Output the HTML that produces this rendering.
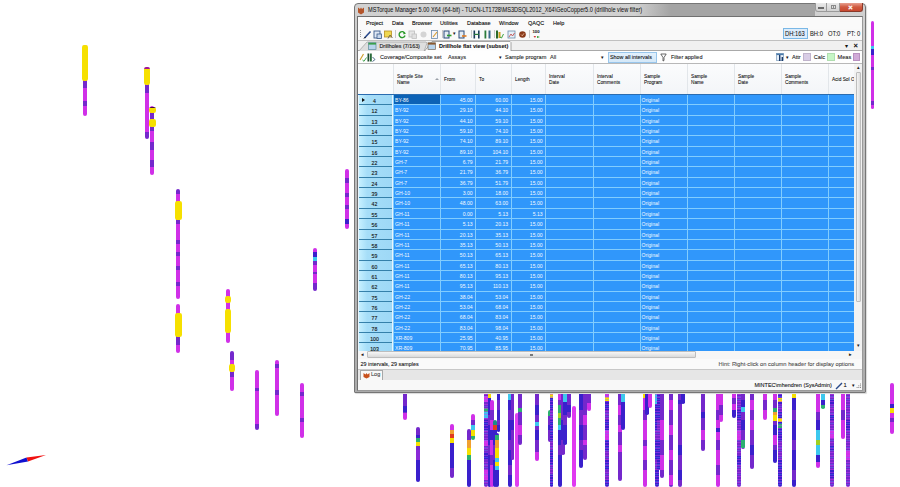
<!DOCTYPE html>
<html><head><meta charset="utf-8">
<style>
html,body{margin:0;padding:0}
body{width:900px;height:487px;overflow:hidden;position:relative;background:#fff;-webkit-font-smoothing:antialiased;font-family:"Liberation Sans",sans-serif;color:#1a1a1a}
i{position:absolute;display:block}
.a{position:absolute}
#win{position:absolute;left:354px;top:3px;width:512px;height:390px;box-sizing:border-box;border:1px solid #767676;border-radius:4px 4px 1px 1px;background:linear-gradient(#d2d2d2,#c8c8c8 60px,#b2b2b2 300px,#ababab);box-shadow:1px 1px 1px rgba(0,0,0,.15)}
#glow{position:absolute;left:280px;top:0;width:180px;height:12px;background:linear-gradient(90deg,rgba(162,162,162,0),#a4a4a4 36px)}
#client{position:absolute;left:2px;top:12px;width:504px;height:373px;border:1px solid #707070;border-right-color:#9a9a9a;border-bottom-color:#9a9a9a;background:#f4f4f4;overflow:hidden}
.t{position:absolute;white-space:nowrap;line-height:1;-webkit-text-stroke:0.12px rgba(20,20,20,.8)}
.title{left:12.7px;top:3.3px;font-size:6.3px;color:#111;transform:scaleX(0.887);transform-origin:0 0;-webkit-text-stroke:0.05px #333}
.menu{font-size:6px;top:2.5px;color:#000;transform:scaleX(0.915);transform-origin:0 0;-webkit-text-stroke:0.12px #222}
.hc{position:absolute;top:0;height:31px;box-sizing:border-box;border-left:1px solid #e2e6ea;background:linear-gradient(#fbfcfd,#f3f5f8)}
.hc span{position:absolute;left:3px;top:9.3px;font-size:5.5px;transform:scaleX(0.87);transform-origin:0 0;line-height:6.3px;color:#111;white-space:nowrap;-webkit-text-stroke:0.12px rgba(20,20,20,.8)}
.hc span.s1{top:12.7px}
.rh{position:absolute;left:1px;width:33px;height:10.34px;box-sizing:border-box;border-bottom:1.5px solid #3580aa;background:linear-gradient(90deg,#c6f0ff,#a6def8 25%,#9ed8f6)}
.rh span{position:absolute;left:-1px;width:33px;text-align:center;top:3px;font-size:5.2px;color:#111;-webkit-text-stroke:0.12px #222}
.arr{position:absolute;left:2.5px;top:3px;width:0;height:0;border-left:3px solid #111;border-top:2px solid transparent;border-bottom:2px solid transparent}
.c{position:absolute;height:10.34px;box-sizing:border-box;border-left:1px solid #82cdfe;border-bottom:1px solid #82cdfe;background:#3097fb;color:#f4faff;font-size:5.1px;line-height:11.5px;padding-left:1px;white-space:nowrap}
.c.n{text-align:right;padding-right:2.4px}
.c.sel{background:#0c62b6}
</style></head><body>
<i style="left:83.2px;top:45.0px;width:4.0px;height:71.0px;background:linear-gradient(#d030e8 0.0px 35.5px,#7428cc 35.5px 43.0px,#d030e8 43.0px 56.0px,#7428cc 56.0px 61.0px,#d030e8 61.0px 71.0px);border-radius:2.0px 2.0px 2.0px 2.0px"></i>
<i style="left:82.2px;top:45.0px;width:6.0px;height:35.5px;background:#f6e000;border-radius:2.2px 2.2px 2.2px 2.2px"></i>
<i style="left:145.0px;top:67.0px;width:4.0px;height:71.5px;background:linear-gradient(#d030e8 0.0px 18.0px,#7428cc 18.0px 26.0px,#d030e8 26.0px 65.0px,#7428cc 65.0px 71.5px);border-radius:2.0px 2.0px 2.0px 2.0px"></i>
<i style="left:143.7px;top:67.2px;width:6.7px;height:18.0px;background:linear-gradient(#a01890 0.0px 1.8px,#f6e000 1.8px 18.0px);border-radius:2.2px 2.2px 2.2px 2.2px"></i>
<i style="left:150.0px;top:105.7px;width:4.0px;height:69.8px;background:linear-gradient(#d030e8 0.0px 7.3px,#7428cc 7.3px 13.3px,#d030e8 13.3px 21.3px,#7428cc 21.3px 25.3px,#d030e8 25.3px 36.3px,#7428cc 36.3px 44.3px,#d030e8 44.3px 54.3px,#7428cc 54.3px 61.3px,#d030e8 61.3px 69.8px);border-radius:2.0px 2.0px 2.0px 2.0px"></i>
<i style="left:148.5px;top:106.5px;width:7.0px;height:6.5px;background:linear-gradient(#401040 0.0px 1.5px,#f6e000 1.5px 6.5px);border-radius:2.2px 2.2px 2.2px 2.2px"></i>
<i style="left:148.5px;top:119.0px;width:7.0px;height:8.0px;background:#f6e000;border-radius:2.2px 2.2px 2.2px 2.2px"></i>
<i style="left:176.3px;top:189.0px;width:4.0px;height:110.2px;background:linear-gradient(#7428cc 0.0px 5.0px,#d030e8 5.0px 31.0px,#7428cc 31.0px 35.0px,#d030e8 35.0px 51.0px,#7428cc 51.0px 55.0px,#d030e8 55.0px 63.0px,#7428cc 63.0px 67.0px,#d030e8 67.0px 77.0px,#7428cc 77.0px 81.0px,#d030e8 81.0px 93.0px,#7428cc 93.0px 97.0px,#d030e8 97.0px 110.2px);border-radius:2.0px 2.0px 2.0px 2.0px"></i>
<i style="left:174.6px;top:200.7px;width:7.4px;height:19.3px;background:#f6e000;border-radius:2.2px 2.2px 2.2px 2.2px"></i>
<i style="left:176.3px;top:304.2px;width:4.0px;height:49.0px;background:linear-gradient(#d030e8 0.0px 32.3px,#7428cc 32.3px 40.8px,#d030e8 40.8px 49.0px);border-radius:2.0px 2.0px 2.0px 2.0px"></i>
<i style="left:175.1px;top:312.5px;width:6.8px;height:24.0px;background:#f6e000;border-radius:2.2px 2.2px 2.2px 2.2px"></i>
<i style="left:225.8px;top:288.6px;width:4.0px;height:54.9px;background:#d030e8;border-radius:2.0px 2.0px 2.0px 2.0px"></i>
<i style="left:224.8px;top:296.0px;width:6.0px;height:6.5px;background:#f6e000;border-radius:2.2px 2.2px 2.2px 2.2px"></i>
<i style="left:224.8px;top:309.0px;width:6.0px;height:24.0px;background:#f6e000;border-radius:2.2px 2.2px 2.2px 2.2px"></i>
<i style="left:229.7px;top:351.0px;width:4.0px;height:39.8px;background:linear-gradient(#7428cc 0.0px 9.0px,#d030e8 9.0px 20.6px,#7428cc 20.6px 26.0px,#d030e8 26.0px 39.8px);border-radius:2.0px 2.0px 2.0px 2.0px"></i>
<i style="left:228.7px;top:363.7px;width:6.0px;height:7.9px;background:#f6e000;border-radius:2.2px 2.2px 2.2px 2.2px"></i>
<i style="left:255.0px;top:370.2px;width:4.0px;height:59.7px;background:linear-gradient(#d030e8 0.0px 17.8px,#7428cc 17.8px 20.8px,#d030e8 20.8px 53.8px,#7428cc 53.8px 59.7px);border-radius:2.0px 2.0px 2.0px 2.0px"></i>
<i style="left:275.3px;top:360.2px;width:4.0px;height:55.4px;background:linear-gradient(#d030e8 0.0px 3.8px,#7428cc 3.8px 7.8px,#d030e8 7.8px 29.8px,#7428cc 29.8px 34.8px,#d030e8 34.8px 55.4px);border-radius:2.0px 2.0px 2.0px 2.0px"></i>
<i style="left:300.3px;top:382.7px;width:4.0px;height:55.5px;background:linear-gradient(#d030e8 0.0px 8.8px,#7428cc 8.8px 13.3px,#d030e8 13.3px 34.8px,#7428cc 34.8px 39.3px,#d030e8 39.3px 55.5px);border-radius:2.0px 2.0px 2.0px 2.0px"></i>
<i style="left:312.9px;top:248.0px;width:4.3px;height:42.5px;background:linear-gradient(#d030e8 0.0px 4.0px,#3a20cc 4.0px 9.0px,#3cc8ee 9.0px 13.0px,#7428cc 13.0px 17.0px,#d030e8 17.0px 24.0px,#7428cc 24.0px 26.0px,#d030e8 26.0px 35.0px,#7428cc 35.0px 42.5px);border-radius:2.1px 2.1px 2.1px 2.1px"></i>
<i style="left:344.6px;top:169.2px;width:4.0px;height:60.3px;background:linear-gradient(#d030e8 0.0px 8.8px,#7428cc 8.8px 13.8px,#d030e8 13.8px 23.8px,#7428cc 23.8px 27.8px,#d030e8 27.8px 35.8px,#7428cc 35.8px 39.8px,#d030e8 39.8px 49.8px,#3a20cc 49.8px 54.8px,#d030e8 54.8px 60.3px);border-radius:2.0px 2.0px 2.0px 2.0px"></i>
<i style="left:870.6px;top:21.3px;width:3.6px;height:88.0px;background:linear-gradient(#d030e8 0.0px 24.7px,#3cc8ee 24.7px 28.2px,#3a20cc 28.2px 33.7px,#d030e8 33.7px 46.2px,#7428cc 46.2px 48.7px,#d030e8 48.7px 80.1px,#7428cc 80.1px 83.7px,#d030e8 83.7px 88.0px);border-radius:1.8px 1.8px 1.8px 1.8px"></i>
<i style="left:889.9px;top:383.0px;width:4.2px;height:51.0px;background:linear-gradient(#d030e8 0.0px 21.3px,#3a20cc 21.3px 25.4px,#f6e000 25.4px 30.0px,#d030e8 30.0px 35.0px,#7428cc 35.0px 39.0px,#d030e8 39.0px 51.0px);border-radius:2.1px 2.1px 2.1px 2.1px"></i>
<i style="left:403.0px;top:394.0px;width:4.0px;height:26.0px;background:linear-gradient(#7428cc 0.0px 12.0px,#3a20cc 12.0px 18.0px,#7428cc 18.0px 19.0px,#d030e8 19.0px 26.0px);border-radius:0 0 2.0px 2.0px"></i>
<i style="left:416.0px;top:427.0px;width:4.0px;height:54.6px;background:linear-gradient(#7428cc 0.0px 8.0px,#3a20cc 8.0px 11.0px,#2cb070 11.0px 15.0px,#f6e000 15.0px 19.0px,#7428cc 19.0px 23.0px,#8a2ad8 23.0px 33.0px,#3a20cc 33.0px 54.6px);border-radius:2.0px 2.0px 2.0px 2.0px"></i>
<i style="left:450.2px;top:424.3px;width:4.0px;height:53.3px;background:linear-gradient(#d030e8 0.0px 5.7px,#f0a030 5.7px 9.7px,#e03a20 9.7px 13.7px,#f6e000 13.7px 18.7px,#3a20cc 18.7px 43.7px,#7428cc 43.7px 53.3px);border-radius:2.0px 2.0px 2.0px 2.0px"></i>
<i style="left:466.5px;top:429.0px;width:4.0px;height:58.0px;background:linear-gradient(#7428cc 0.0px 11.0px,#f0a030 11.0px 19.0px,#f6e000 19.0px 26.0px,#2cb070 26.0px 31.0px,#3a20cc 31.0px 58.0px);border-radius:2.0px 2.0px 2.0px 2.0px"></i>
<i style="left:470.5px;top:414.0px;width:4.0px;height:26.0px;background:linear-gradient(#d030e8 0.0px 6.0px,#7428cc 6.0px 11.0px,#3cc8ee 11.0px 16.0px,#f6e000 16.0px 22.0px,#2cb070 22.0px 26.0px);border-radius:2.0px 2.0px 2.0px 2.0px"></i>
<i style="left:484.0px;top:394.0px;width:4.0px;height:93.0px;background:repeating-linear-gradient(rgba(210,60,240,.45) 0 1px,transparent 1px 2px,rgba(90,140,255,.35) 2px 2.6px,transparent 2.6px 3.4px),linear-gradient(#7428cc 0.0px 2.0px,#d030e8 2.0px 8.0px,#7428cc 8.0px 14.0px,#2cb070 14.0px 18.0px,#3cc8ee 18.0px 24.0px,#7428cc 24.0px 26.0px,#3a20cc 26.0px 36.0px,#7428cc 36.0px 46.0px,#d030e8 46.0px 52.0px,#7428cc 52.0px 58.0px,#3a20cc 58.0px 66.0px,#7428cc 66.0px 76.0px,#d030e8 76.0px 86.0px,#7428cc 86.0px 93.0px);border-radius:0 0 2.0px 2.0px"></i>
<i style="left:488.0px;top:394.0px;width:3.0px;height:93.0px;background:linear-gradient(#f6e000 0.0px 4.0px,#3a20cc 4.0px 21.0px,#7428cc 21.0px 31.0px,#3a20cc 31.0px 51.0px,#7428cc 51.0px 61.0px,#3a20cc 61.0px 93.0px);border-radius:0 0 1.5px 1.5px"></i>
<i style="left:490.0px;top:400.0px;width:4.0px;height:87.0px;background:linear-gradient(#d030e8 0.0px 10.0px,#7428cc 10.0px 20.0px,#d030e8 20.0px 30.0px,#3a20cc 30.0px 40.0px,#d030e8 40.0px 55.0px,#7428cc 55.0px 65.0px,#d030e8 65.0px 87.0px);border-radius:2.0px 2.0px 2.0px 2.0px"></i>
<i style="left:492.5px;top:420.0px;width:4.0px;height:67.0px;background:linear-gradient(#1a8a8a 0.0px 5.0px,#e03a20 5.0px 10.0px,#3a20cc 10.0px 25.0px,#7428cc 25.0px 40.0px,#3a20cc 40.0px 67.0px);border-radius:2.0px 2.0px 2.0px 2.0px"></i>
<i style="left:495.0px;top:433.0px;width:4.0px;height:54.0px;background:linear-gradient(#3a20cc 0.0px 2.0px,#2cb070 2.0px 7.0px,#f0a030 7.0px 15.0px,#f6e000 15.0px 25.0px,#3cc8ee 25.0px 29.0px,#f6e000 29.0px 33.0px,#3cc8ee 33.0px 37.0px,#3a20cc 37.0px 54.0px);border-radius:2.0px 2.0px 2.0px 2.0px"></i>
<i style="left:496.8px;top:394.0px;width:3.5px;height:38.0px;background:linear-gradient(#3a20cc 0.0px 6.0px,#7428cc 6.0px 16.0px,#3a20cc 16.0px 26.0px,#7428cc 26.0px 31.0px,#3a20cc 31.0px 38.0px);border-radius:0 0 1.8px 1.8px"></i>
<i style="left:508.0px;top:394.0px;width:4.0px;height:93.0px;background:linear-gradient(#3cc8ee 0.0px 6.0px,#3a20cc 6.0px 16.0px,#7428cc 16.0px 26.0px,#3a20cc 26.0px 46.0px,#7428cc 46.0px 56.0px,#3a20cc 56.0px 71.0px,#7428cc 71.0px 81.0px,#3a20cc 81.0px 93.0px);border-radius:0 0 2.0px 2.0px"></i>
<i style="left:510.8px;top:394.0px;width:3.5px;height:66.0px;background:linear-gradient(#7428cc 0.0px 26.0px,#3a20cc 26.0px 36.0px,#7428cc 36.0px 66.0px);border-radius:0 0 1.8px 1.8px"></i>
<i style="left:514.7px;top:413.0px;width:4.2px;height:74.0px;background:#e040f0;border-radius:2.1px 2.1px 2.1px 2.1px"></i>
<i style="left:518.0px;top:394.0px;width:4.0px;height:51.0px;background:linear-gradient(#7428cc 0.0px 14.0px,#2cb070 14.0px 18.0px,#7428cc 18.0px 31.0px,#d030e8 31.0px 41.0px,#7428cc 41.0px 51.0px);border-radius:0 0 2.0px 2.0px"></i>
<i style="left:535.0px;top:394.0px;width:4.0px;height:66.7px;background:linear-gradient(#7428cc 0.0px 11.0px,#3a20cc 11.0px 21.0px,#7428cc 21.0px 28.0px,#3cc8ee 28.0px 32.0px,#7428cc 32.0px 36.0px,#3a20cc 36.0px 46.0px,#7428cc 46.0px 58.0px,#d030e8 58.0px 66.7px);border-radius:0 0 2.0px 2.0px"></i>
<i style="left:547.5px;top:410.0px;width:4.0px;height:32.0px;background:linear-gradient(#2cb070 0.0px 6.0px,#7428cc 6.0px 15.0px,#3a20cc 15.0px 20.0px,#7428cc 20.0px 32.0px);border-radius:2.0px 2.0px 2.0px 2.0px"></i>
<i style="left:549.8px;top:394.0px;width:3.5px;height:93.0px;background:repeating-linear-gradient(rgba(210,60,240,.45) 0 1px,transparent 1px 2px,rgba(90,140,255,.35) 2px 2.6px,transparent 2.6px 3.4px),linear-gradient(#f6e000 0.0px 4.0px,#3a20cc 4.0px 16.0px,#7428cc 16.0px 26.0px,#3a20cc 26.0px 46.0px,#7428cc 46.0px 56.0px,#3a20cc 56.0px 71.0px,#7428cc 71.0px 81.0px,#3a20cc 81.0px 93.0px);border-radius:0 0 1.8px 1.8px"></i>
<i style="left:557.8px;top:394.0px;width:4.0px;height:93.0px;background:linear-gradient(#d030e8 0.0px 6.0px,#7428cc 6.0px 11.0px,#2cb070 11.0px 19.0px,#a0d020 19.0px 24.0px,#2cb070 24.0px 31.0px,#3cc8ee 31.0px 36.0px,#3a20cc 36.0px 51.0px,#7428cc 51.0px 61.0px,#3a20cc 61.0px 93.0px);border-radius:0 0 2.0px 2.0px"></i>
<i style="left:561.2px;top:394.0px;width:3.5px;height:61.0px;background:linear-gradient(#7428cc 0.0px 26.0px,#3a20cc 26.0px 46.0px,#7428cc 46.0px 61.0px);border-radius:0 0 1.8px 1.8px"></i>
<i style="left:563.2px;top:394.0px;width:3.5px;height:51.0px;background:linear-gradient(#3cc8ee 0.0px 8.0px,#3a20cc 8.0px 21.0px,#7428cc 21.0px 31.0px,#3a20cc 31.0px 51.0px);border-radius:0 0 1.8px 1.8px"></i>
<i style="left:566.8px;top:394.0px;width:4.0px;height:24.0px;background:linear-gradient(#7428cc 0.0px 11.0px,#3a20cc 11.0px 18.0px,#7428cc 18.0px 24.0px);border-radius:0 0 2.0px 2.0px"></i>
<i style="left:571.7px;top:406.0px;width:4.2px;height:81.0px;background:#e038f0;border-radius:2.1px 2.1px 2.1px 2.1px"></i>
<i style="left:578.6px;top:394.0px;width:4.0px;height:73.7px;background:linear-gradient(#3a20cc 0.0px 16.0px,#7428cc 16.0px 31.0px,#3a20cc 31.0px 46.0px,#7428cc 46.0px 56.0px,#3a20cc 56.0px 73.7px);border-radius:0 0 2.0px 2.0px"></i>
<i style="left:583.0px;top:394.0px;width:4.0px;height:65.7px;background:linear-gradient(#7428cc 0.0px 21.0px,#d030e8 21.0px 31.0px,#7428cc 31.0px 46.0px,#d030e8 46.0px 51.0px,#7428cc 51.0px 65.7px);border-radius:0 0 2.0px 2.0px"></i>
<i style="left:587.3px;top:394.0px;width:4.0px;height:17.0px;background:linear-gradient(#7428cc 0.0px 9.0px,#d030e8 9.0px 17.0px);border-radius:0 0 2.0px 2.0px"></i>
<i style="left:604.5px;top:394.0px;width:4.0px;height:93.0px;background:repeating-linear-gradient(rgba(210,60,240,.45) 0 1px,transparent 1px 2px,rgba(90,140,255,.35) 2px 2.6px,transparent 2.6px 3.4px),linear-gradient(#d030e8 0.0px 3.0px,#f6e000 3.0px 7.0px,#3a20cc 7.0px 16.0px,#7428cc 16.0px 26.0px,#3a20cc 26.0px 36.0px,#d030e8 36.0px 46.0px,#3a20cc 46.0px 56.0px,#7428cc 56.0px 66.0px,#3a20cc 66.0px 76.0px,#7428cc 76.0px 86.0px,#3a20cc 86.0px 93.0px);border-radius:0 0 2.0px 2.0px"></i>
<i style="left:617.8px;top:394.0px;width:4.0px;height:86.6px;background:linear-gradient(#7428cc 0.0px 11.0px,#d030e8 11.0px 21.0px,#7428cc 21.0px 31.0px,#d030e8 31.0px 38.0px,#7428cc 38.0px 51.0px,#d030e8 51.0px 58.0px,#7428cc 58.0px 86.6px);border-radius:0 0 2.0px 2.0px"></i>
<i style="left:620.8px;top:394.0px;width:4.0px;height:35.8px;background:linear-gradient(#3cc8ee 0.0px 8.0px,#3a20cc 8.0px 35.8px);border-radius:0 0 2.0px 2.0px"></i>
<i style="left:642.6px;top:394.0px;width:4.0px;height:93.0px;background:linear-gradient(#f6e000 0.0px 4.0px,#d030e8 4.0px 16.0px,#7428cc 16.0px 26.0px,#d030e8 26.0px 46.0px,#7428cc 46.0px 52.0px,#d030e8 52.0px 66.0px,#7428cc 66.0px 76.0px,#d030e8 76.0px 93.0px);border-radius:0 0 2.0px 2.0px"></i>
<i style="left:645.2px;top:394.0px;width:3.5px;height:21.0px;background:#3a20cc;border-radius:0 0 1.8px 1.8px"></i>
<i style="left:647.8px;top:394.0px;width:4.5px;height:14.0px;background:#d030e8;border-radius:0 0 2.2px 2.2px"></i>
<i style="left:655.0px;top:394.0px;width:4.0px;height:93.0px;background:repeating-linear-gradient(rgba(210,60,240,.45) 0 1px,transparent 1px 2px,rgba(90,140,255,.35) 2px 2.6px,transparent 2.6px 3.4px),linear-gradient(#3cc8ee 0.0px 10.0px,#3a20cc 10.0px 36.0px,#7428cc 36.0px 46.0px,#3a20cc 46.0px 66.0px,#7428cc 66.0px 76.0px,#3a20cc 76.0px 93.0px);border-radius:0 0 2.0px 2.0px"></i>
<i style="left:657.2px;top:394.0px;width:3.5px;height:76.0px;background:repeating-linear-gradient(rgba(210,60,240,.45) 0 1px,transparent 1px 2px,rgba(90,140,255,.35) 2px 2.6px,transparent 2.6px 3.4px),linear-gradient(#3a20cc 0.0px 26.0px,#7428cc 26.0px 46.0px,#3a20cc 46.0px 76.0px);border-radius:0 0 1.8px 1.8px"></i>
<i style="left:660.0px;top:394.0px;width:4.0px;height:83.6px;background:linear-gradient(#7428cc 0.0px 26.0px,#d030e8 26.0px 46.0px,#7428cc 46.0px 61.0px,#d030e8 61.0px 76.0px,#7428cc 76.0px 83.6px);border-radius:0 0 2.0px 2.0px"></i>
<i style="left:669.0px;top:394.0px;width:4.0px;height:93.0px;background:linear-gradient(#7428cc 0.0px 6.0px,#d030e8 6.0px 16.0px,#7428cc 16.0px 31.0px,#d030e8 31.0px 41.0px,#7428cc 41.0px 56.0px,#d030e8 56.0px 66.0px,#7428cc 66.0px 81.0px,#d030e8 81.0px 91.0px,#7428cc 91.0px 93.0px);border-radius:0 0 2.0px 2.0px"></i>
<i style="left:678.0px;top:394.0px;width:4.0px;height:93.0px;background:linear-gradient(#7428cc 0.0px 6.0px,#3a20cc 6.0px 10.0px,#7428cc 10.0px 51.0px,#3a20cc 51.0px 61.0px,#7428cc 61.0px 76.0px,#3a20cc 76.0px 86.0px,#7428cc 86.0px 93.0px);border-radius:0 0 2.0px 2.0px"></i>
<i style="left:681.0px;top:394.0px;width:3.5px;height:10.0px;background:#3a20cc;border-radius:0 0 1.8px 1.8px"></i>
<i style="left:701.0px;top:394.0px;width:4.0px;height:57.4px;background:linear-gradient(#7428cc 0.0px 18.0px,#3a20cc 18.0px 24.0px,#7428cc 24.0px 36.0px,#d030e8 36.0px 46.0px,#7428cc 46.0px 57.4px);border-radius:0 0 2.0px 2.0px"></i>
<i style="left:715.5px;top:394.0px;width:4.0px;height:93.0px;background:linear-gradient(#d030e8 0.0px 16.0px,#7428cc 16.0px 26.0px,#d030e8 26.0px 34.0px,#3a20cc 34.0px 38.0px,#d030e8 38.0px 46.0px,#7428cc 46.0px 56.0px,#d030e8 56.0px 71.0px,#7428cc 71.0px 81.0px,#d030e8 81.0px 93.0px);border-radius:0 0 2.0px 2.0px"></i>
<i style="left:719.0px;top:394.0px;width:4.0px;height:28.0px;background:linear-gradient(#d030e8 0.0px 11.0px,#7428cc 11.0px 21.0px,#d030e8 21.0px 28.0px);border-radius:0 0 2.0px 2.0px"></i>
<i style="left:732.2px;top:394.0px;width:4.0px;height:24.0px;background:linear-gradient(#d030e8 0.0px 4.0px,#7428cc 4.0px 10.0px,#d030e8 10.0px 16.0px,#3a20cc 16.0px 24.0px);border-radius:0 0 2.0px 2.0px"></i>
<i style="left:736.8px;top:394.0px;width:4.0px;height:93.0px;background:repeating-linear-gradient(rgba(210,60,240,.45) 0 1px,transparent 1px 2px,rgba(90,140,255,.35) 2px 2.6px,transparent 2.6px 3.4px),linear-gradient(#7428cc 0.0px 16.0px,#3a20cc 16.0px 26.0px,#7428cc 26.0px 36.0px,#d030e8 36.0px 46.0px,#7428cc 46.0px 61.0px,#3a20cc 61.0px 71.0px,#7428cc 71.0px 93.0px);border-radius:0 0 2.0px 2.0px"></i>
<i style="left:741.4px;top:394.0px;width:4.0px;height:55.0px;background:linear-gradient(#7428cc 0.0px 6.0px,#3a20cc 6.0px 13.0px,#3cc8ee 13.0px 18.0px,#7428cc 18.0px 26.0px,#3a20cc 26.0px 36.0px,#7428cc 36.0px 46.0px,#2cb070 46.0px 54.0px,#7428cc 54.0px 55.0px);border-radius:0 0 2.0px 2.0px"></i>
<i style="left:750.0px;top:394.0px;width:4.0px;height:74.7px;background:linear-gradient(#7428cc 0.0px 6.0px,#d030e8 6.0px 16.0px,#7428cc 16.0px 26.0px,#d030e8 26.0px 36.0px,#7428cc 36.0px 51.0px,#3a20cc 51.0px 61.0px,#7428cc 61.0px 74.7px);border-radius:0 0 2.0px 2.0px"></i>
<i style="left:763.0px;top:394.0px;width:4.0px;height:26.0px;background:linear-gradient(#d030e8 0.0px 6.0px,#7428cc 6.0px 16.0px,#d030e8 16.0px 26.0px);border-radius:0 0 2.0px 2.0px"></i>
<i style="left:773.0px;top:394.0px;width:4.0px;height:69.3px;background:linear-gradient(#d030e8 0.0px 6.0px,#7428cc 6.0px 14.0px,#2cb070 14.0px 18.0px,#f0a030 18.0px 21.0px,#f6e000 21.0px 27.0px,#7428cc 27.0px 31.0px,#3a20cc 31.0px 41.0px,#d030e8 41.0px 51.0px,#7428cc 51.0px 56.0px,#3a20cc 56.0px 69.0px,#7428cc 69.0px 69.3px);border-radius:0 0 2.0px 2.0px"></i>
<i style="left:778.0px;top:394.0px;width:4.0px;height:93.0px;background:repeating-linear-gradient(rgba(210,60,240,.45) 0 1px,transparent 1px 2px,rgba(90,140,255,.35) 2px 2.6px,transparent 2.6px 3.4px),linear-gradient(#3a20cc 0.0px 4.0px,#f6e000 4.0px 8.0px,#3a20cc 8.0px 11.0px,#7428cc 11.0px 18.0px,#3a20cc 18.0px 24.0px,#f6e000 24.0px 28.0px,#3a20cc 28.0px 30.0px,#2cb070 30.0px 34.0px,#3a20cc 34.0px 46.0px,#7428cc 46.0px 66.0px,#3a20cc 66.0px 93.0px);border-radius:0 0 2.0px 2.0px"></i>
<i style="left:791.8px;top:394.0px;width:4.0px;height:93.0px;background:linear-gradient(#f6e000 0.0px 4.0px,#3a20cc 4.0px 16.0px,#7428cc 16.0px 26.0px,#3a20cc 26.0px 46.0px,#7428cc 46.0px 56.0px,#3a20cc 56.0px 76.0px,#7428cc 76.0px 86.0px,#3a20cc 86.0px 93.0px);border-radius:0 0 2.0px 2.0px"></i>
<i style="left:815.5px;top:394.0px;width:4.0px;height:74.0px;background:linear-gradient(#d030e8 0.0px 18.0px,#7428cc 18.0px 26.0px,#3a20cc 26.0px 36.0px,#3cc8ee 36.0px 46.0px,#a0d020 46.0px 51.0px,#3cc8ee 51.0px 61.0px,#3a20cc 61.0px 68.0px,#d030e8 68.0px 74.0px);border-radius:0 0 2.0px 2.0px"></i>
<i style="left:821.2px;top:394.0px;width:3.5px;height:15.0px;background:linear-gradient(#3cc8ee 0.0px 6.0px,#3a20cc 6.0px 11.0px,#2cb070 11.0px 15.0px);border-radius:0 0 1.8px 1.8px"></i>
<i style="left:829.5px;top:394.0px;width:4.0px;height:93.0px;background:repeating-linear-gradient(rgba(210,60,240,.45) 0 1px,transparent 1px 2px,rgba(90,140,255,.35) 2px 2.6px,transparent 2.6px 3.4px),linear-gradient(#7428cc 0.0px 6.0px,#3a20cc 6.0px 11.0px,#7428cc 11.0px 21.0px,#3a20cc 21.0px 26.0px,#7428cc 26.0px 36.0px,#d030e8 36.0px 44.0px,#7428cc 44.0px 51.0px,#3a20cc 51.0px 56.0px,#7428cc 56.0px 76.0px,#3a20cc 76.0px 84.0px,#7428cc 84.0px 93.0px);border-radius:0 0 2.0px 2.0px"></i>
<i style="left:841.4px;top:394.0px;width:4.0px;height:45.4px;background:linear-gradient(#d030e8 0.0px 16.0px,#7428cc 16.0px 26.0px,#d030e8 26.0px 45.4px);border-radius:0 0 2.0px 2.0px"></i>
<i style="left:845.8px;top:394.0px;width:4.0px;height:93.0px;background:repeating-linear-gradient(rgba(210,60,240,.45) 0 1px,transparent 1px 2px,rgba(90,140,255,.35) 2px 2.6px,transparent 2.6px 3.4px),linear-gradient(#7428cc 0.0px 26.0px,#3a20cc 26.0px 36.0px,#7428cc 36.0px 56.0px,#d030e8 56.0px 66.0px,#7428cc 66.0px 93.0px);border-radius:0 0 2.0px 2.0px"></i>
<svg class="a" style="left:0;top:0" width="60" height="487"><polygon points="6.5,465.3 26.5,457.6 28,461.6" fill="#1010d0"/><polygon points="26.5,457.6 46,455 28,461.6" fill="#f01010"/></svg>
<div id="win">
  <!-- title -->
  <div id="glow"></div>
  <svg class="a" style="left:2px;top:2px" width="8" height="9"><path d="M1,1.5 L3,3 L4,1.5 L5,3 L7,1.5 L7,6.5 L4,8.5 L1,6.5Z" fill="#b4552a"/></svg>
  <div class="t title">MSTorque Manager 5.00 X64 (64-bit) - TUCN-LT1728\MS3DSQL2012_X64\GeoCopper5.0 (drillhole view filter)</div>
  <!-- caption buttons -->
  <div class="a" style="left:459.5px;top:-1px;width:12.5px;height:9px;box-sizing:border-box;border:1px solid #9a9a9a;border-top:0;border-radius:0 0 0 3px;background:linear-gradient(#eaeaea,#d2d2d2)"><i style="left:2.3px;top:4.1px;width:6.6px;height:2.2px;box-sizing:border-box;background:#fff;border:0.7px solid #6a6a6a"></i></div>
  <div class="a" style="left:472px;top:-1px;width:13px;height:9px;box-sizing:border-box;border:1px solid #9a9a9a;border-top:0;border-left:0;background:linear-gradient(#eaeaea,#d2d2d2)"><i style="left:4px;top:2.3px;width:5.4px;height:4px;border:0.8px solid #8a8a8a;box-sizing:border-box;background:linear-gradient(90deg,transparent 40%,#8a8a8a 40% 60%,transparent 60%)"></i></div>
  <div class="a" style="left:485px;top:-1px;width:22.5px;height:9px;box-sizing:border-box;border:1px solid #8a3a2a;border-top:0;border-left:0;border-radius:0 0 3px 0;background:linear-gradient(#e8a090,#d05a40 50%,#c84830)"><span class="t" style="left:8.2px;top:0.6px;font-size:7.5px;color:#fff;font-weight:bold;-webkit-text-stroke:0.3px #fff">×</span></div>
  <div id="client">
    <!-- menu bar -->
    <div class="a" style="left:0;top:0;width:504px;height:11.5px;background:#fafafa"></div>
    <div class="t menu" style="left:7.5px">Project</div>
    <div class="t menu" style="left:33.5px">Data</div>
    <div class="t menu" style="left:53.5px">Browser</div>
    <div class="t menu" style="left:82px">Utilities</div>
    <div class="t menu" style="left:109px">Database</div>
    <div class="t menu" style="left:140.5px">Window</div>
    <div class="t menu" style="left:170px">QAQC</div>
    <div class="t menu" style="left:195px">Help</div>
    <!-- toolbar -->
    <div class="a" style="left:0;top:11.5px;width:504px;height:11.5px;background:#f9f9f9"></div>
    <i style="left:2px;top:13px;width:1px;height:8px;background:repeating-linear-gradient(#999 0 1px,transparent 1px 2px)"></i>
<svg class="a" style="left:4.5px;top:12.5px" width="9" height="9"><path d="M1.5,8 L7.5,1.5" stroke="#2a4a8c" stroke-width="1.6"/><path d="M1,8.5 L2.5,7" stroke="#111" stroke-width="1"/></svg>
<svg class="a" style="left:15.2px;top:12.5px" width="9" height="9"><rect x="1" y="1" width="6" height="7" fill="#dfe8f4" stroke="#3a5a8a" stroke-width="0.9"/><rect x="4" y="4" width="4.5" height="4.5" fill="#c8d8ec" stroke="#3a5a8a" stroke-width="0.8"/></svg>
<svg class="a" style="left:26.3px;top:12.5px" width="9" height="9"><rect x="0.5" y="1" width="7" height="6" fill="#f0d850" stroke="#b89020" stroke-width="0.8"/><path d="M4,8.5 L6,5 L8.5,8" stroke="#555" fill="none" stroke-width="0.8"/></svg>
<i style="left:37.4px;top:13px;width:0.8px;height:8px;background:#c8c8c8"></i>
<svg class="a" style="left:39.5px;top:12.5px" width="9" height="9"><path d="M6.8,3.2 A3,3 0 1 0 7,5.5" stroke="#2a9a2a" stroke-width="1.4" fill="none"/><path d="M5.2,1.5 L8,3.5 L5.5,4.5Z" fill="#2a9a2a"/></svg>
<svg class="a" style="left:50.2px;top:12.5px" width="9" height="9"><rect x="1" y="1" width="5.5" height="6" fill="#e6e6e6" stroke="#c0c0c0" stroke-width="0.9"/><rect x="4" y="4" width="4.5" height="4.5" fill="#e0e0e0" stroke="#c0c0c0" stroke-width="0.8"/></svg>
<svg class="a" style="left:60.5px;top:12.5px" width="9" height="9"><circle cx="4.5" cy="4.5" r="3" fill="#d4d4d4"/></svg>
<svg class="a" style="left:71.8px;top:12.5px" width="9" height="9"><rect x="1.5" y="0.5" width="6" height="8" fill="#f4f4f8" stroke="#6a8aaa" stroke-width="0.8"/><path d="M3,7 L7,2" stroke="#d8a030" stroke-width="1.2"/></svg>
<i style="left:83.6px;top:13px;width:0.8px;height:8px;background:#c8c8c8"></i>
<svg class="a" style="left:85.2px;top:12.5px" width="9" height="9"><rect x="1" y="1" width="5" height="7" fill="#e4ecf4" stroke="#2a4a7a" stroke-width="1"/><path d="M4,5.5 L8.5,5.5" stroke="#2a9a2a" stroke-width="1.6"/></svg>
<div class="t" style="left:94.5px;top:14px;font-size:5px">▾</div>
<svg class="a" style="left:100.3px;top:12.5px" width="9" height="9"><rect x="1" y="1" width="5" height="7" fill="#e4ecf4" stroke="#2a4a7a" stroke-width="1"/><path d="M4,6 L8.5,6" stroke="#e07a20" stroke-width="1.6"/></svg>
<i style="left:112.5px;top:13px;width:0.8px;height:8px;background:#c8c8c8"></i>
<svg class="a" style="left:113.5px;top:12.5px" width="9" height="9"><rect x="1.5" y="0.5" width="1.6" height="8" fill="#1a3a5a"/><rect x="6" y="0.5" width="1.6" height="8" fill="#1a3a5a"/><rect x="2" y="3.8" width="5" height="1.2" fill="#2a7a3a"/></svg>
<svg class="a" style="left:124.5px;top:12.5px" width="9" height="9"><rect x="1.5" y="0.5" width="1.8" height="8" fill="#2a7a3a"/><rect x="5.5" y="0.5" width="2" height="8" fill="#3a6a8a"/></svg>
<i style="left:136.4px;top:13px;width:0.8px;height:8px;background:#c8c8c8"></i>
<svg class="a" style="left:136.9px;top:12.5px" width="9" height="9"><rect x="1" y="0.5" width="2" height="8" fill="#2a6a2a"/><rect x="3.5" y="2" width="2" height="6" fill="#c8a020"/><path d="M5,7 L6.5,8 L8.5,4" stroke="#2a9a2a" fill="none" stroke-width="0.9"/></svg>
<svg class="a" style="left:148.5px;top:12.5px" width="9" height="9"><rect x="1" y="1" width="7" height="7" fill="#e4f0f8" stroke="#6a8aaa" stroke-width="0.8"/><path d="M2,7 L4,4 L5.5,6 L7.5,3" stroke="#c04040" fill="none" stroke-width="0.8"/></svg>
<svg class="a" style="left:159.5px;top:12.5px" width="9" height="9"><circle cx="4.5" cy="4.5" r="3.3" fill="#8a3a1a"/><path d="M3,4.5 L4.3,5.8 L6,3.3" stroke="#f0c0a0" fill="none" stroke-width="0.8"/></svg>
<i style="left:171.4px;top:13px;width:0.8px;height:8px;background:#c8c8c8"></i>
<div class="t" style="left:174.5px;top:12.8px;font-size:4.2px;font-weight:bold;color:#333">100</div>
<svg class="a" style="left:173.5px;top:12.5px" width="9" height="9"><path d="M1.5,6 L3,8 L4,6Z" fill="#d03030"/><path d="M5,6 L8,7 L5,8Z" fill="#2a9a2a"/></svg>
    <!-- stats -->
    <div class="a" style="left:425px;top:11px;width:24.7px;height:11px;box-sizing:border-box;border:1px solid #7ab8e6;background:#dcecfb"></div>
    <div class="t" style="left:427px;top:14.1px;font-size:6.5px;color:#111;transform:scaleX(0.89);transform-origin:0 0;-webkit-text-stroke:0.05px #333">DH:163</div>
    <div class="t" style="left:452px;top:14.1px;font-size:6.5px;color:#111;transform:scaleX(0.89);transform-origin:0 0;-webkit-text-stroke:0.05px #333">BH:0</div>
    <div class="t" style="left:470px;top:14.1px;font-size:6.5px;color:#111;transform:scaleX(0.89);transform-origin:0 0;-webkit-text-stroke:0.05px #333">OT:0</div>
    <div class="t" style="left:489px;top:14.1px;font-size:6.5px;color:#111;transform:scaleX(0.89);transform-origin:0 0;-webkit-text-stroke:0.05px #333">PT: 0</div>
    <!-- tab strip -->
    <div class="a" style="left:0;top:23px;width:504px;height:10px;background:#f0f0f0;border-top:0.8px solid #c0c0c0;border-bottom:1px solid #a8a8a8;box-sizing:border-box;height:11px"></div>
    <svg class="a" style="left:0;top:23.5px" width="160" height="11">
      <path d="M0.5,10.5 L9,1 L68,1 L69,2 L66,10.5" fill="#dedede" stroke="#a8a8a8" stroke-width="0.8"/>
      <path d="M66,10.8 L74,0.5 L152,0.5 L153,1.5 L153,10.8" fill="#fdfdfd" stroke="#909090" stroke-width="0.8"/>
      <rect x="10.5" y="1.8" width="7.5" height="6.8" fill="#b8d4ec" stroke="#5a8a9a" stroke-width="0.7"/>
      <rect x="10.5" y="1.8" width="7.5" height="1.8" fill="#3aa04a"/>
      <rect x="70" y="1.8" width="7.5" height="6.8" fill="#b8d4ec" stroke="#7a6a5a" stroke-width="0.7"/>
      <rect x="70" y="1.8" width="7.5" height="1.8" fill="#8a5a30"/>
    </svg>
    <div class="t" style="left:21.5px;top:27px;font-size:5.35px;color:#111;-webkit-text-stroke:0.12px #333">Drillholes (7/163)</div>
    <div class="t" style="left:81px;top:27px;font-size:5.6px;font-weight:bold;color:#111">Drillhole flat view (subset)</div>
    <div class="t" style="left:487px;top:25.8px;font-size:6px;color:#111">▾</div>
    <div class="t" style="left:495.5px;top:24.5px;font-size:7.5px;font-weight:bold;color:#111">×</div>
    <!-- filter bar -->
    <div class="a" style="left:0;top:34px;width:504px;height:12.3px;background:#fefefe;border-bottom:1px solid #b8b8b8"></div>
    <svg class="a" style="left:0.5px;top:36px" width="8" height="9"><path d="M1,7 L4.5,1" stroke="#d0a030" stroke-width="1.2"/><path d="M3.5,7 L5,8.3 L7.5,4.5" stroke="#2a9a3a" fill="none" stroke-width="0.9"/></svg>
<svg class="a" style="left:9px;top:35.8px" width="9" height="9"><rect x="0.5" y="0.5" width="1.8" height="8" fill="#1a4a2a"/><rect x="3" y="0.5" width="1.8" height="8" fill="#2a6a3a"/><path d="M5.5,4 L8,6.5 L5.5,8.5" stroke="#3a5a7a" fill="none" stroke-width="0.9"/></svg>
<div class="t" style="left:22px;top:37.8px;font-size:5.6px;color:#222;">Coverage/Composite set</div>
<div class="t" style="left:90px;top:37.8px;font-size:5.6px;color:#333;">Assays</div>
<div class="t" style="left:141.3px;top:38.5px;font-size:4.5px;color:#111;">▾</div>
<div class="t" style="left:147px;top:37.8px;font-size:5.6px;color:#222;">Sample program</div>
<div class="t" style="left:192px;top:37.8px;font-size:5.6px;color:#333;">All</div>
<div class="t" style="left:243px;top:38.5px;font-size:4.5px;color:#111;">▾</div>
<div class="a" style="left:250px;top:35.2px;width:48.6px;height:10.8px;box-sizing:border-box;border:0.8px solid #98c6ec;background:linear-gradient(#e2f0fc,#d4e8f8)"></div>
<div class="t" style="left:252px;top:38px;font-size:5.4px;color:#111;">Show all intervals</div>
<svg class="a" style="left:302px;top:36px" width="7" height="9"><path d="M0.8,1 L6.2,1 L4,4.5 L4,7.5 L3,8 L3,4.5Z" fill="#fff" stroke="#444" stroke-width="0.8"/></svg>
<div class="t" style="left:313px;top:37.8px;font-size:5.5px;color:#222;">Filter applied</div>
<svg class="a" style="left:417.5px;top:36px" width="8" height="8"><rect x="0.5" y="0.5" width="7" height="7" fill="#e4eef8" stroke="#7a9aba" stroke-width="0.7"/><rect x="0.5" y="0.5" width="7" height="1.6" fill="#4a7aaa"/><rect x="3" y="2" width="1.4" height="6" fill="#1a3a6a"/><rect x="5.6" y="4" width="1.4" height="4" fill="#1a3a6a"/></svg>
<div class="t" style="left:428px;top:38.5px;font-size:4.5px;color:#111;">▾</div>
<div class="t" style="left:434px;top:37.8px;font-size:5.6px;color:#222;">Attr</div>
<div class="a" style="left:445px;top:36.3px;width:8px;height:7.3px;background:#d8cde6;border:0.5px solid #c0b4cc;box-sizing:border-box"></div>
<div class="t" style="left:455.8px;top:37.8px;font-size:5.6px;color:#222;">Calc</div>
<div class="a" style="left:469px;top:36.3px;width:7.5px;height:7.3px;background:#c6f6c6;border:0.5px solid #b0deb0;box-sizing:border-box"></div>
<div class="t" style="left:479.5px;top:37.8px;font-size:5.6px;color:#222;">Meas</div>
<div class="a" style="left:495px;top:36.3px;width:7px;height:7.3px;background:#d0aad8;border:0.5px solid #b890c0;box-sizing:border-box"></div>
    <!-- grid -->
    <div class="a" style="left:0;top:46.5px;width:496px;height:287px;overflow:hidden;background:#fff">
      <div class="a" style="left:0;top:0;width:36px;height:31px;background:#fbfcfd"></div>
      <div class="hc" style="left:35.0px;width:47.0px"><span>Sample Site<br>Name</span><b style="position:absolute;left:41px;top:14.5px;width:0;height:0;border-left:2.5px solid transparent;border-right:2.5px solid transparent;border-bottom:2.5px solid #9aa0a8"></b></div><div class="hc" style="left:82.0px;width:35.0px"><span class="s1">From</span></div><div class="hc" style="left:117.0px;width:35.5px"><span class="s1">To</span></div><div class="hc" style="left:152.5px;width:34.5px"><span class="s1">Length</span></div><div class="hc" style="left:187.0px;width:47.5px"><span>Interval<br>Date</span></div><div class="hc" style="left:234.5px;width:47.0px"><span>Interval<br>Comments</span></div><div class="hc" style="left:281.5px;width:47.0px"><span>Sample<br>Program</span></div><div class="hc" style="left:328.5px;width:47.0px"><span>Sample<br>Name</span></div><div class="hc" style="left:375.5px;width:47.0px"><span>Sample<br>Date</span></div><div class="hc" style="left:422.5px;width:47.0px"><span>Sample<br>Comments</span></div><div class="hc" style="left:469.5px;width:47.0px"><span class="s1">Acid Sol O...</span></div>
      <div class="a" style="left:0;top:30.7px;width:496.5px;height:1px;background:#2a6cb0"></div>
      <div class="a" style="left:0;top:31.6px;width:496px;height:260px;background:#e8f4fc">
      <div class="rh" style="top:0.00px"><b class=arr></b><span>4</span></div>
<div class="c sel" style="left:35.0px;top:0.00px;width:47.0px">BY-86</div>
<div class="c n" style="left:82.0px;top:0.00px;width:35.0px">45.00</div>
<div class="c n" style="left:117.0px;top:0.00px;width:35.5px">60.00</div>
<div class="c n" style="left:152.5px;top:0.00px;width:34.5px">15.00</div>
<div class="c" style="left:187.0px;top:0.00px;width:47.5px"></div>
<div class="c" style="left:234.5px;top:0.00px;width:47.0px"></div>
<div class="c" style="left:281.5px;top:0.00px;width:47.0px">Original</div>
<div class="c" style="left:328.5px;top:0.00px;width:47.0px"></div>
<div class="c" style="left:375.5px;top:0.00px;width:47.0px"></div>
<div class="c" style="left:422.5px;top:0.00px;width:47.0px"></div>
<div class="c" style="left:469.5px;top:0.00px;width:47.0px"></div>
<div class="rh" style="top:10.34px"><span>12</span></div>
<div class="c" style="left:35.0px;top:10.34px;width:47.0px">BY-92</div>
<div class="c n" style="left:82.0px;top:10.34px;width:35.0px">29.10</div>
<div class="c n" style="left:117.0px;top:10.34px;width:35.5px">44.10</div>
<div class="c n" style="left:152.5px;top:10.34px;width:34.5px">15.00</div>
<div class="c" style="left:187.0px;top:10.34px;width:47.5px"></div>
<div class="c" style="left:234.5px;top:10.34px;width:47.0px"></div>
<div class="c" style="left:281.5px;top:10.34px;width:47.0px">Original</div>
<div class="c" style="left:328.5px;top:10.34px;width:47.0px"></div>
<div class="c" style="left:375.5px;top:10.34px;width:47.0px"></div>
<div class="c" style="left:422.5px;top:10.34px;width:47.0px"></div>
<div class="c" style="left:469.5px;top:10.34px;width:47.0px"></div>
<div class="rh" style="top:20.68px"><span>13</span></div>
<div class="c" style="left:35.0px;top:20.68px;width:47.0px">BY-92</div>
<div class="c n" style="left:82.0px;top:20.68px;width:35.0px">44.10</div>
<div class="c n" style="left:117.0px;top:20.68px;width:35.5px">59.10</div>
<div class="c n" style="left:152.5px;top:20.68px;width:34.5px">15.00</div>
<div class="c" style="left:187.0px;top:20.68px;width:47.5px"></div>
<div class="c" style="left:234.5px;top:20.68px;width:47.0px"></div>
<div class="c" style="left:281.5px;top:20.68px;width:47.0px">Original</div>
<div class="c" style="left:328.5px;top:20.68px;width:47.0px"></div>
<div class="c" style="left:375.5px;top:20.68px;width:47.0px"></div>
<div class="c" style="left:422.5px;top:20.68px;width:47.0px"></div>
<div class="c" style="left:469.5px;top:20.68px;width:47.0px"></div>
<div class="rh" style="top:31.02px"><span>14</span></div>
<div class="c" style="left:35.0px;top:31.02px;width:47.0px">BY-92</div>
<div class="c n" style="left:82.0px;top:31.02px;width:35.0px">59.10</div>
<div class="c n" style="left:117.0px;top:31.02px;width:35.5px">74.10</div>
<div class="c n" style="left:152.5px;top:31.02px;width:34.5px">15.00</div>
<div class="c" style="left:187.0px;top:31.02px;width:47.5px"></div>
<div class="c" style="left:234.5px;top:31.02px;width:47.0px"></div>
<div class="c" style="left:281.5px;top:31.02px;width:47.0px">Original</div>
<div class="c" style="left:328.5px;top:31.02px;width:47.0px"></div>
<div class="c" style="left:375.5px;top:31.02px;width:47.0px"></div>
<div class="c" style="left:422.5px;top:31.02px;width:47.0px"></div>
<div class="c" style="left:469.5px;top:31.02px;width:47.0px"></div>
<div class="rh" style="top:41.36px"><span>15</span></div>
<div class="c" style="left:35.0px;top:41.36px;width:47.0px">BY-92</div>
<div class="c n" style="left:82.0px;top:41.36px;width:35.0px">74.10</div>
<div class="c n" style="left:117.0px;top:41.36px;width:35.5px">89.10</div>
<div class="c n" style="left:152.5px;top:41.36px;width:34.5px">15.00</div>
<div class="c" style="left:187.0px;top:41.36px;width:47.5px"></div>
<div class="c" style="left:234.5px;top:41.36px;width:47.0px"></div>
<div class="c" style="left:281.5px;top:41.36px;width:47.0px">Original</div>
<div class="c" style="left:328.5px;top:41.36px;width:47.0px"></div>
<div class="c" style="left:375.5px;top:41.36px;width:47.0px"></div>
<div class="c" style="left:422.5px;top:41.36px;width:47.0px"></div>
<div class="c" style="left:469.5px;top:41.36px;width:47.0px"></div>
<div class="rh" style="top:51.70px"><span>16</span></div>
<div class="c" style="left:35.0px;top:51.70px;width:47.0px">BY-92</div>
<div class="c n" style="left:82.0px;top:51.70px;width:35.0px">89.10</div>
<div class="c n" style="left:117.0px;top:51.70px;width:35.5px">104.10</div>
<div class="c n" style="left:152.5px;top:51.70px;width:34.5px">15.00</div>
<div class="c" style="left:187.0px;top:51.70px;width:47.5px"></div>
<div class="c" style="left:234.5px;top:51.70px;width:47.0px"></div>
<div class="c" style="left:281.5px;top:51.70px;width:47.0px">Original</div>
<div class="c" style="left:328.5px;top:51.70px;width:47.0px"></div>
<div class="c" style="left:375.5px;top:51.70px;width:47.0px"></div>
<div class="c" style="left:422.5px;top:51.70px;width:47.0px"></div>
<div class="c" style="left:469.5px;top:51.70px;width:47.0px"></div>
<div class="rh" style="top:62.04px"><span>22</span></div>
<div class="c" style="left:35.0px;top:62.04px;width:47.0px">GH-7</div>
<div class="c n" style="left:82.0px;top:62.04px;width:35.0px">6.79</div>
<div class="c n" style="left:117.0px;top:62.04px;width:35.5px">21.79</div>
<div class="c n" style="left:152.5px;top:62.04px;width:34.5px">15.00</div>
<div class="c" style="left:187.0px;top:62.04px;width:47.5px"></div>
<div class="c" style="left:234.5px;top:62.04px;width:47.0px"></div>
<div class="c" style="left:281.5px;top:62.04px;width:47.0px">Original</div>
<div class="c" style="left:328.5px;top:62.04px;width:47.0px"></div>
<div class="c" style="left:375.5px;top:62.04px;width:47.0px"></div>
<div class="c" style="left:422.5px;top:62.04px;width:47.0px"></div>
<div class="c" style="left:469.5px;top:62.04px;width:47.0px"></div>
<div class="rh" style="top:72.38px"><span>23</span></div>
<div class="c" style="left:35.0px;top:72.38px;width:47.0px">GH-7</div>
<div class="c n" style="left:82.0px;top:72.38px;width:35.0px">21.79</div>
<div class="c n" style="left:117.0px;top:72.38px;width:35.5px">36.79</div>
<div class="c n" style="left:152.5px;top:72.38px;width:34.5px">15.00</div>
<div class="c" style="left:187.0px;top:72.38px;width:47.5px"></div>
<div class="c" style="left:234.5px;top:72.38px;width:47.0px"></div>
<div class="c" style="left:281.5px;top:72.38px;width:47.0px">Original</div>
<div class="c" style="left:328.5px;top:72.38px;width:47.0px"></div>
<div class="c" style="left:375.5px;top:72.38px;width:47.0px"></div>
<div class="c" style="left:422.5px;top:72.38px;width:47.0px"></div>
<div class="c" style="left:469.5px;top:72.38px;width:47.0px"></div>
<div class="rh" style="top:82.72px"><span>24</span></div>
<div class="c" style="left:35.0px;top:82.72px;width:47.0px">GH-7</div>
<div class="c n" style="left:82.0px;top:82.72px;width:35.0px">36.79</div>
<div class="c n" style="left:117.0px;top:82.72px;width:35.5px">51.79</div>
<div class="c n" style="left:152.5px;top:82.72px;width:34.5px">15.00</div>
<div class="c" style="left:187.0px;top:82.72px;width:47.5px"></div>
<div class="c" style="left:234.5px;top:82.72px;width:47.0px"></div>
<div class="c" style="left:281.5px;top:82.72px;width:47.0px">Original</div>
<div class="c" style="left:328.5px;top:82.72px;width:47.0px"></div>
<div class="c" style="left:375.5px;top:82.72px;width:47.0px"></div>
<div class="c" style="left:422.5px;top:82.72px;width:47.0px"></div>
<div class="c" style="left:469.5px;top:82.72px;width:47.0px"></div>
<div class="rh" style="top:93.06px"><span>39</span></div>
<div class="c" style="left:35.0px;top:93.06px;width:47.0px">GH-10</div>
<div class="c n" style="left:82.0px;top:93.06px;width:35.0px">3.00</div>
<div class="c n" style="left:117.0px;top:93.06px;width:35.5px">18.00</div>
<div class="c n" style="left:152.5px;top:93.06px;width:34.5px">15.00</div>
<div class="c" style="left:187.0px;top:93.06px;width:47.5px"></div>
<div class="c" style="left:234.5px;top:93.06px;width:47.0px"></div>
<div class="c" style="left:281.5px;top:93.06px;width:47.0px">Original</div>
<div class="c" style="left:328.5px;top:93.06px;width:47.0px"></div>
<div class="c" style="left:375.5px;top:93.06px;width:47.0px"></div>
<div class="c" style="left:422.5px;top:93.06px;width:47.0px"></div>
<div class="c" style="left:469.5px;top:93.06px;width:47.0px"></div>
<div class="rh" style="top:103.40px"><span>42</span></div>
<div class="c" style="left:35.0px;top:103.40px;width:47.0px">GH-10</div>
<div class="c n" style="left:82.0px;top:103.40px;width:35.0px">48.00</div>
<div class="c n" style="left:117.0px;top:103.40px;width:35.5px">63.00</div>
<div class="c n" style="left:152.5px;top:103.40px;width:34.5px">15.00</div>
<div class="c" style="left:187.0px;top:103.40px;width:47.5px"></div>
<div class="c" style="left:234.5px;top:103.40px;width:47.0px"></div>
<div class="c" style="left:281.5px;top:103.40px;width:47.0px">Original</div>
<div class="c" style="left:328.5px;top:103.40px;width:47.0px"></div>
<div class="c" style="left:375.5px;top:103.40px;width:47.0px"></div>
<div class="c" style="left:422.5px;top:103.40px;width:47.0px"></div>
<div class="c" style="left:469.5px;top:103.40px;width:47.0px"></div>
<div class="rh" style="top:113.74px"><span>55</span></div>
<div class="c" style="left:35.0px;top:113.74px;width:47.0px">GH-11</div>
<div class="c n" style="left:82.0px;top:113.74px;width:35.0px">0.00</div>
<div class="c n" style="left:117.0px;top:113.74px;width:35.5px">5.13</div>
<div class="c n" style="left:152.5px;top:113.74px;width:34.5px">5.13</div>
<div class="c" style="left:187.0px;top:113.74px;width:47.5px"></div>
<div class="c" style="left:234.5px;top:113.74px;width:47.0px"></div>
<div class="c" style="left:281.5px;top:113.74px;width:47.0px">Original</div>
<div class="c" style="left:328.5px;top:113.74px;width:47.0px"></div>
<div class="c" style="left:375.5px;top:113.74px;width:47.0px"></div>
<div class="c" style="left:422.5px;top:113.74px;width:47.0px"></div>
<div class="c" style="left:469.5px;top:113.74px;width:47.0px"></div>
<div class="rh" style="top:124.08px"><span>56</span></div>
<div class="c" style="left:35.0px;top:124.08px;width:47.0px">GH-11</div>
<div class="c n" style="left:82.0px;top:124.08px;width:35.0px">5.13</div>
<div class="c n" style="left:117.0px;top:124.08px;width:35.5px">20.13</div>
<div class="c n" style="left:152.5px;top:124.08px;width:34.5px">15.00</div>
<div class="c" style="left:187.0px;top:124.08px;width:47.5px"></div>
<div class="c" style="left:234.5px;top:124.08px;width:47.0px"></div>
<div class="c" style="left:281.5px;top:124.08px;width:47.0px">Original</div>
<div class="c" style="left:328.5px;top:124.08px;width:47.0px"></div>
<div class="c" style="left:375.5px;top:124.08px;width:47.0px"></div>
<div class="c" style="left:422.5px;top:124.08px;width:47.0px"></div>
<div class="c" style="left:469.5px;top:124.08px;width:47.0px"></div>
<div class="rh" style="top:134.42px"><span>57</span></div>
<div class="c" style="left:35.0px;top:134.42px;width:47.0px">GH-11</div>
<div class="c n" style="left:82.0px;top:134.42px;width:35.0px">20.13</div>
<div class="c n" style="left:117.0px;top:134.42px;width:35.5px">35.13</div>
<div class="c n" style="left:152.5px;top:134.42px;width:34.5px">15.00</div>
<div class="c" style="left:187.0px;top:134.42px;width:47.5px"></div>
<div class="c" style="left:234.5px;top:134.42px;width:47.0px"></div>
<div class="c" style="left:281.5px;top:134.42px;width:47.0px">Original</div>
<div class="c" style="left:328.5px;top:134.42px;width:47.0px"></div>
<div class="c" style="left:375.5px;top:134.42px;width:47.0px"></div>
<div class="c" style="left:422.5px;top:134.42px;width:47.0px"></div>
<div class="c" style="left:469.5px;top:134.42px;width:47.0px"></div>
<div class="rh" style="top:144.76px"><span>58</span></div>
<div class="c" style="left:35.0px;top:144.76px;width:47.0px">GH-11</div>
<div class="c n" style="left:82.0px;top:144.76px;width:35.0px">35.13</div>
<div class="c n" style="left:117.0px;top:144.76px;width:35.5px">50.13</div>
<div class="c n" style="left:152.5px;top:144.76px;width:34.5px">15.00</div>
<div class="c" style="left:187.0px;top:144.76px;width:47.5px"></div>
<div class="c" style="left:234.5px;top:144.76px;width:47.0px"></div>
<div class="c" style="left:281.5px;top:144.76px;width:47.0px">Original</div>
<div class="c" style="left:328.5px;top:144.76px;width:47.0px"></div>
<div class="c" style="left:375.5px;top:144.76px;width:47.0px"></div>
<div class="c" style="left:422.5px;top:144.76px;width:47.0px"></div>
<div class="c" style="left:469.5px;top:144.76px;width:47.0px"></div>
<div class="rh" style="top:155.10px"><span>59</span></div>
<div class="c" style="left:35.0px;top:155.10px;width:47.0px">GH-11</div>
<div class="c n" style="left:82.0px;top:155.10px;width:35.0px">50.13</div>
<div class="c n" style="left:117.0px;top:155.10px;width:35.5px">65.13</div>
<div class="c n" style="left:152.5px;top:155.10px;width:34.5px">15.00</div>
<div class="c" style="left:187.0px;top:155.10px;width:47.5px"></div>
<div class="c" style="left:234.5px;top:155.10px;width:47.0px"></div>
<div class="c" style="left:281.5px;top:155.10px;width:47.0px">Original</div>
<div class="c" style="left:328.5px;top:155.10px;width:47.0px"></div>
<div class="c" style="left:375.5px;top:155.10px;width:47.0px"></div>
<div class="c" style="left:422.5px;top:155.10px;width:47.0px"></div>
<div class="c" style="left:469.5px;top:155.10px;width:47.0px"></div>
<div class="rh" style="top:165.44px"><span>60</span></div>
<div class="c" style="left:35.0px;top:165.44px;width:47.0px">GH-11</div>
<div class="c n" style="left:82.0px;top:165.44px;width:35.0px">65.13</div>
<div class="c n" style="left:117.0px;top:165.44px;width:35.5px">80.13</div>
<div class="c n" style="left:152.5px;top:165.44px;width:34.5px">15.00</div>
<div class="c" style="left:187.0px;top:165.44px;width:47.5px"></div>
<div class="c" style="left:234.5px;top:165.44px;width:47.0px"></div>
<div class="c" style="left:281.5px;top:165.44px;width:47.0px">Original</div>
<div class="c" style="left:328.5px;top:165.44px;width:47.0px"></div>
<div class="c" style="left:375.5px;top:165.44px;width:47.0px"></div>
<div class="c" style="left:422.5px;top:165.44px;width:47.0px"></div>
<div class="c" style="left:469.5px;top:165.44px;width:47.0px"></div>
<div class="rh" style="top:175.78px"><span>61</span></div>
<div class="c" style="left:35.0px;top:175.78px;width:47.0px">GH-11</div>
<div class="c n" style="left:82.0px;top:175.78px;width:35.0px">80.13</div>
<div class="c n" style="left:117.0px;top:175.78px;width:35.5px">95.13</div>
<div class="c n" style="left:152.5px;top:175.78px;width:34.5px">15.00</div>
<div class="c" style="left:187.0px;top:175.78px;width:47.5px"></div>
<div class="c" style="left:234.5px;top:175.78px;width:47.0px"></div>
<div class="c" style="left:281.5px;top:175.78px;width:47.0px">Original</div>
<div class="c" style="left:328.5px;top:175.78px;width:47.0px"></div>
<div class="c" style="left:375.5px;top:175.78px;width:47.0px"></div>
<div class="c" style="left:422.5px;top:175.78px;width:47.0px"></div>
<div class="c" style="left:469.5px;top:175.78px;width:47.0px"></div>
<div class="rh" style="top:186.12px"><span>62</span></div>
<div class="c" style="left:35.0px;top:186.12px;width:47.0px">GH-11</div>
<div class="c n" style="left:82.0px;top:186.12px;width:35.0px">95.13</div>
<div class="c n" style="left:117.0px;top:186.12px;width:35.5px">110.13</div>
<div class="c n" style="left:152.5px;top:186.12px;width:34.5px">15.00</div>
<div class="c" style="left:187.0px;top:186.12px;width:47.5px"></div>
<div class="c" style="left:234.5px;top:186.12px;width:47.0px"></div>
<div class="c" style="left:281.5px;top:186.12px;width:47.0px">Original</div>
<div class="c" style="left:328.5px;top:186.12px;width:47.0px"></div>
<div class="c" style="left:375.5px;top:186.12px;width:47.0px"></div>
<div class="c" style="left:422.5px;top:186.12px;width:47.0px"></div>
<div class="c" style="left:469.5px;top:186.12px;width:47.0px"></div>
<div class="rh" style="top:196.46px"><span>75</span></div>
<div class="c" style="left:35.0px;top:196.46px;width:47.0px">GH-22</div>
<div class="c n" style="left:82.0px;top:196.46px;width:35.0px">38.04</div>
<div class="c n" style="left:117.0px;top:196.46px;width:35.5px">53.04</div>
<div class="c n" style="left:152.5px;top:196.46px;width:34.5px">15.00</div>
<div class="c" style="left:187.0px;top:196.46px;width:47.5px"></div>
<div class="c" style="left:234.5px;top:196.46px;width:47.0px"></div>
<div class="c" style="left:281.5px;top:196.46px;width:47.0px">Original</div>
<div class="c" style="left:328.5px;top:196.46px;width:47.0px"></div>
<div class="c" style="left:375.5px;top:196.46px;width:47.0px"></div>
<div class="c" style="left:422.5px;top:196.46px;width:47.0px"></div>
<div class="c" style="left:469.5px;top:196.46px;width:47.0px"></div>
<div class="rh" style="top:206.80px"><span>76</span></div>
<div class="c" style="left:35.0px;top:206.80px;width:47.0px">GH-22</div>
<div class="c n" style="left:82.0px;top:206.80px;width:35.0px">53.04</div>
<div class="c n" style="left:117.0px;top:206.80px;width:35.5px">68.04</div>
<div class="c n" style="left:152.5px;top:206.80px;width:34.5px">15.00</div>
<div class="c" style="left:187.0px;top:206.80px;width:47.5px"></div>
<div class="c" style="left:234.5px;top:206.80px;width:47.0px"></div>
<div class="c" style="left:281.5px;top:206.80px;width:47.0px">Original</div>
<div class="c" style="left:328.5px;top:206.80px;width:47.0px"></div>
<div class="c" style="left:375.5px;top:206.80px;width:47.0px"></div>
<div class="c" style="left:422.5px;top:206.80px;width:47.0px"></div>
<div class="c" style="left:469.5px;top:206.80px;width:47.0px"></div>
<div class="rh" style="top:217.14px"><span>77</span></div>
<div class="c" style="left:35.0px;top:217.14px;width:47.0px">GH-22</div>
<div class="c n" style="left:82.0px;top:217.14px;width:35.0px">68.04</div>
<div class="c n" style="left:117.0px;top:217.14px;width:35.5px">83.04</div>
<div class="c n" style="left:152.5px;top:217.14px;width:34.5px">15.00</div>
<div class="c" style="left:187.0px;top:217.14px;width:47.5px"></div>
<div class="c" style="left:234.5px;top:217.14px;width:47.0px"></div>
<div class="c" style="left:281.5px;top:217.14px;width:47.0px">Original</div>
<div class="c" style="left:328.5px;top:217.14px;width:47.0px"></div>
<div class="c" style="left:375.5px;top:217.14px;width:47.0px"></div>
<div class="c" style="left:422.5px;top:217.14px;width:47.0px"></div>
<div class="c" style="left:469.5px;top:217.14px;width:47.0px"></div>
<div class="rh" style="top:227.48px"><span>78</span></div>
<div class="c" style="left:35.0px;top:227.48px;width:47.0px">GH-22</div>
<div class="c n" style="left:82.0px;top:227.48px;width:35.0px">83.04</div>
<div class="c n" style="left:117.0px;top:227.48px;width:35.5px">98.04</div>
<div class="c n" style="left:152.5px;top:227.48px;width:34.5px">15.00</div>
<div class="c" style="left:187.0px;top:227.48px;width:47.5px"></div>
<div class="c" style="left:234.5px;top:227.48px;width:47.0px"></div>
<div class="c" style="left:281.5px;top:227.48px;width:47.0px">Original</div>
<div class="c" style="left:328.5px;top:227.48px;width:47.0px"></div>
<div class="c" style="left:375.5px;top:227.48px;width:47.0px"></div>
<div class="c" style="left:422.5px;top:227.48px;width:47.0px"></div>
<div class="c" style="left:469.5px;top:227.48px;width:47.0px"></div>
<div class="rh" style="top:237.82px"><span>100</span></div>
<div class="c" style="left:35.0px;top:237.82px;width:47.0px">XR-809</div>
<div class="c n" style="left:82.0px;top:237.82px;width:35.0px">25.95</div>
<div class="c n" style="left:117.0px;top:237.82px;width:35.5px">40.95</div>
<div class="c n" style="left:152.5px;top:237.82px;width:34.5px">15.00</div>
<div class="c" style="left:187.0px;top:237.82px;width:47.5px"></div>
<div class="c" style="left:234.5px;top:237.82px;width:47.0px"></div>
<div class="c" style="left:281.5px;top:237.82px;width:47.0px">Original</div>
<div class="c" style="left:328.5px;top:237.82px;width:47.0px"></div>
<div class="c" style="left:375.5px;top:237.82px;width:47.0px"></div>
<div class="c" style="left:422.5px;top:237.82px;width:47.0px"></div>
<div class="c" style="left:469.5px;top:237.82px;width:47.0px"></div>
<div class="rh" style="top:248.16px"><span>103</span></div>
<div class="c" style="left:35.0px;top:248.16px;width:47.0px">XR-809</div>
<div class="c n" style="left:82.0px;top:248.16px;width:35.0px">70.95</div>
<div class="c n" style="left:117.0px;top:248.16px;width:35.5px">85.95</div>
<div class="c n" style="left:152.5px;top:248.16px;width:34.5px">15.00</div>
<div class="c" style="left:187.0px;top:248.16px;width:47.5px"></div>
<div class="c" style="left:234.5px;top:248.16px;width:47.0px"></div>
<div class="c" style="left:281.5px;top:248.16px;width:47.0px">Original</div>
<div class="c" style="left:328.5px;top:248.16px;width:47.0px"></div>
<div class="c" style="left:375.5px;top:248.16px;width:47.0px"></div>
<div class="c" style="left:422.5px;top:248.16px;width:47.0px"></div>
<div class="c" style="left:469.5px;top:248.16px;width:47.0px"></div>
      </div>
    </div>
    <!-- vscroll -->
    <div class="a" style="left:496px;top:46.5px;width:8px;height:287.5px;background:#f2f2f2"></div>
    <div class="t" style="left:498.5px;top:48px;font-size:5px">▴</div>
    <div class="a" style="left:497.5px;top:55px;width:5px;height:230px;box-sizing:border-box;border:0.6px solid #bdbdbd;border-radius:1px;background:linear-gradient(90deg,#f4f4f4,#dcdcdc)"></div>
    <div class="t" style="left:498.5px;top:325.5px;font-size:5px">▾</div>
    <!-- hscroll -->
    <div class="a" style="left:0;top:333.5px;width:504px;height:8px;background:#f6f6f6"></div>
    <div class="t" style="left:2.5px;top:334.8px;font-size:5px">◂</div>
    <div class="a" style="left:8.5px;top:334.2px;width:329px;height:6.7px;box-sizing:border-box;border:0.6px solid #bdbdbd;border-radius:1px;background:linear-gradient(#f6f6f6,#dadada)"></div>
    <div class="t" style="left:491px;top:334.8px;font-size:5px">▸</div>
    <i style="left:171.5px;top:336.5px;width:3px;height:2.5px;background:repeating-linear-gradient(90deg,#777 0 0.7px,transparent 0.7px 1.2px)"></i>
    <!-- status -->
    <div class="a" style="left:0;top:341.5px;width:504px;height:10px;background:#fafafa;border-bottom:1px solid #c8c8c8"></div>
    <div class="t" style="left:2.5px;top:344.5px;font-size:5.4px;color:#111">29 intervals, 29 samples</div>
    <div class="t" style="left:360.5px;top:344.5px;font-size:5.75px;color:#666">Hint: Right-click on column header for display options</div>
    <div class="a" style="left:0;top:352.5px;width:504px;height:10.5px;background:#e6e6e6"></div>
    <div class="a" style="left:2px;top:353px;width:23px;height:10px;box-sizing:border-box;border:0.8px solid #a8a8a8;border-bottom:0;background:#f8f8f8"></div>
    <svg class="a" style="left:4.5px;top:355px" width="7" height="7"><path d="M0.5,1 L2.5,2.5 L3.5,1 L4.5,2.5 L6.5,1 L6.5,5 L3.5,6.5 L0.5,5Z" fill="#c8501c"/></svg>
    <div class="t" style="left:13px;top:355.3px;font-size:5.6px;color:#555">Log</div>
    <div class="a" style="left:0;top:363px;width:504px;height:10px;background:#f8f8f8"></div>
    <div class="t" style="left:396.5px;top:366.3px;font-size:5.5px;color:#111">MINTEC\mhendren (SysAdmin)</div>
    <svg class="a" style="left:477px;top:365px" width="8" height="8"><path d="M1,7 L7,1" stroke="#2a4a8a" stroke-width="1.4"/></svg>
    <div class="t" style="left:485.5px;top:366px;font-size:5.8px;color:#111">1</div>
    <div class="t" style="left:494px;top:366px;font-size:5px;color:#111">▾</div>
    <svg class="a" style="left:497.5px;top:366px" width="6" height="6" fill="#8a8a8a"><rect x="4" y="0.5" width="1" height="1"/><rect x="2.3" y="2.3" width="1" height="1"/><rect x="4" y="2.3" width="1" height="1"/><rect x="0.6" y="4" width="1" height="1"/><rect x="2.3" y="4" width="1" height="1"/><rect x="4" y="4" width="1" height="1"/></svg>
  </div>
</div>
</body></html>
